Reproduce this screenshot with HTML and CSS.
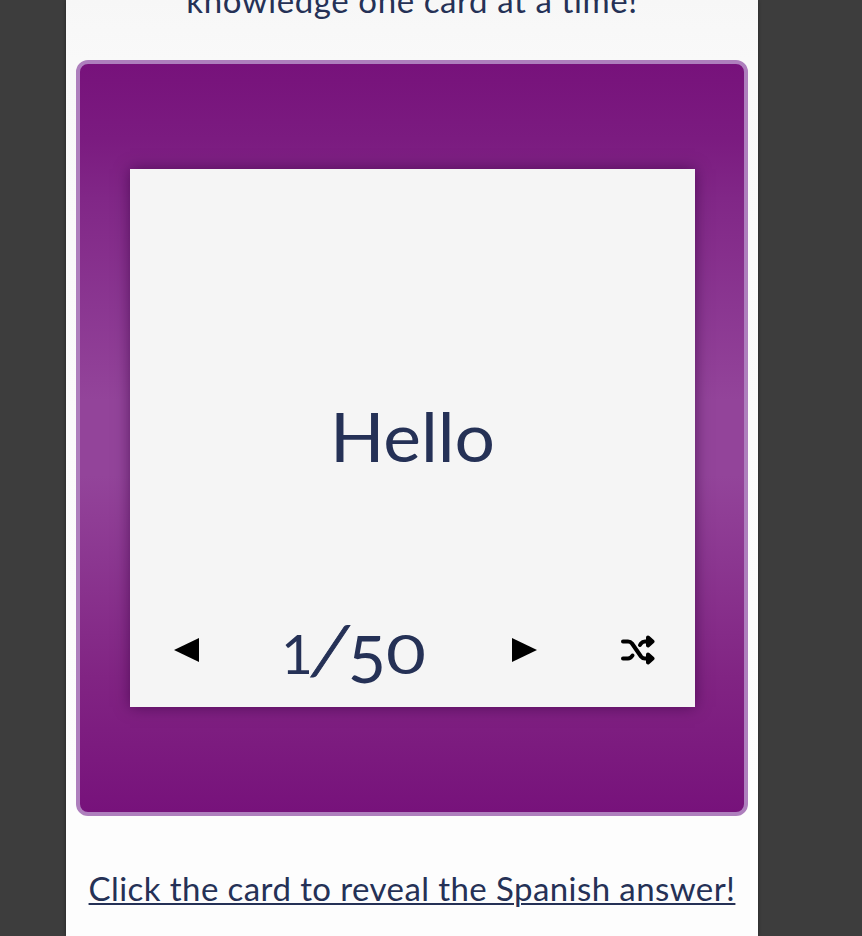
FILE: index.html
```html
<!DOCTYPE html>
<html lang="en">
<head>
<meta charset="utf-8">
<title>Flashcards</title>
<link rel="stylesheet" href="styles.css">
</head>
<body>
<main class="page">
  <p class="intro"><span>knowledge one card at a time!</span></p>
  <section class="deck">
    <article class="card">
      <div class="word">Hello</div>
      <div class="controls">
        <svg class="prev" viewBox="0 0 25 24"><path d="M25 0V24L0 12Z"/></svg>
        <div class="count"><span class="one">1</span><span class="slash">/</span><span class="five">5</span><span class="zero">0</span></div>
        <svg class="next" viewBox="0 0 25 24"><path d="M0 0V24L25 12Z"/></svg>
        <svg class="shuffle" viewBox="0 0 36 30"><g fill="none" stroke="#000" stroke-width="4" stroke-linecap="round" stroke-linejoin="round"><path d="M3 6.500H8Q10.500 6.500 12 8.500L21 21.500Q22.500 23.500 25 23.500H28"/><path d="M3 23.500H8Q10.500 23.500 12.500 20.500"/><path d="M20 10L21 8.500Q22.500 6.500 25 6.500H28"/></g><path stroke="#000" stroke-width="4" stroke-linejoin="round" d="M28 2.500L32.500 6.500L28 10.500ZM28 19.500L32.500 23.500L28 27.500Z"/></svg>
      </div>
    </article>
  </section>
  <p class="hint"><span>Click the card to reveal the Spanish answer!</span></p>
</main>
</body>
</html>
```
FILE: styles.css
```css
* { box-sizing: border-box; }
body {
  margin: 0;
  height: 936px;
  overflow: hidden;
  background: #3d3d3d;
  color: #253156;
  font-family: Lato, sans-serif;
}
.page {
  width: 692px;
  height: 936px;
  margin-left: 66px;
  padding: 0 10px;
  overflow: hidden;
  background: linear-gradient(#f7f7f7, #f9f9f9 60px, #fdfdfd 800px, #fdfdfd);
  box-shadow: 0 0 3px #222;
}
.intro, .hint {
  margin: 0;
  font-size: 33px;
  line-height: 40px;
  text-align: center;
  white-space: nowrap;
}
.intro { margin-top: -20px; letter-spacing: .6px; }
.deck {
  height: 756px;
  margin-top: 40px;
  padding: 105px 49px 0 50px;
  border: 4px solid #ae7fbd;
  border-radius: 12px;
  background: linear-gradient(#77127b, #7b1b80 10%, #812787 18%, #93449a 45%, #93449a 55%, #812483 82%, #77127b);
}
.card {
  display: flex;
  flex-direction: column;
  height: 538px;
  background: #f5f5f5;
  box-shadow: 0 0 14px rgba(50, 0, 60, .6);
}
.word {
  height: 425px;
  padding-top: 227px;
  font-size: 67px;
  line-height: 80px;
  text-align: center;
  transform: scaleX(1.065);
}
.controls {
  display: flex;
  align-items: flex-start;
  height: 113px;
  padding: 26px 39px 0 44px;
}
.prev, .next { width: 25px; height: 24px; margin-top: 18px; }
.count {
  display: grid;
  grid-template-columns: 28px 39px 36px 40px;
  align-items: baseline;
  justify-items: center;
  width: 143px;
  height: 80px;
  margin: -11px 86px 0 84px;
  line-height: 80px;
}
.one, .zero { font-size: 55px; }
.slash, .five { font-size: 66px; }
.slash { transform: skewX(-15deg); -webkit-text-stroke: 1px #253156; }
.five { transform: translate(-1px, 9px); }
.zero { transform: scaleX(1.25); }
.shuffle { width: 36px; height: 30px; margin: 15px 0 0 auto; }
.hint { margin-top: 52px; letter-spacing: .42px; }
.hint span {
  text-decoration: underline;
  text-decoration-thickness: 2px;
  text-underline-offset: 2px;
}
```
